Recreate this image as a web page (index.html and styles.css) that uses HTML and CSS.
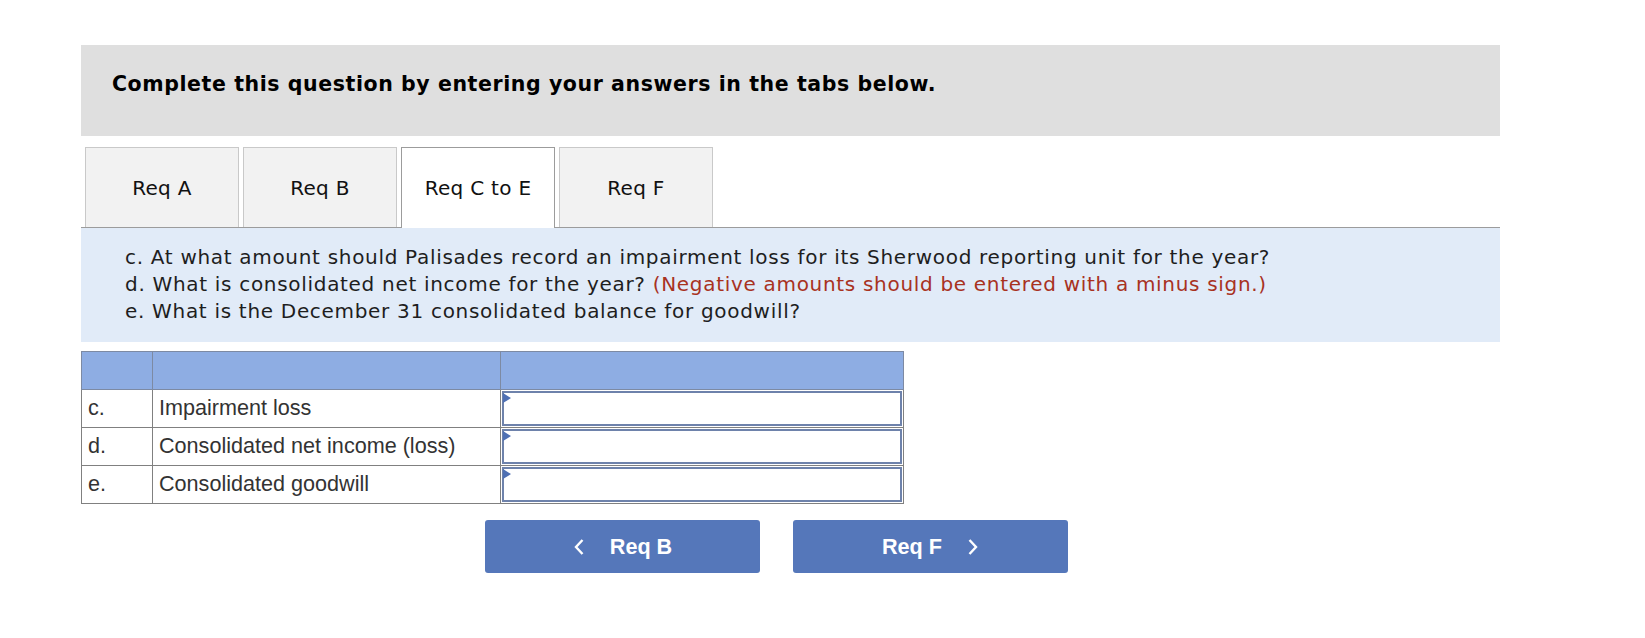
FILE: index.html
```html
<!DOCTYPE html>
<html>
<head>
<meta charset="utf-8">
<link rel="stylesheet" href="styles.css">
</head>
<body>
<div class="page">
  <div class="instructions">Complete this question by entering your answers in the tabs below.</div>
  <div class="tabs">
    <div class="tab">Req A</div>
    <div class="tab">Req B</div>
    <div class="tab active">Req C to E</div>
    <div class="tab">Req F</div>
  </div>
  <div class="panel">
    <p>c. At what amount should Palisades record an impairment loss for its Sherwood reporting unit for the year?</p>
    <p>d. What is consolidated net income for the year? <span class="note">(Negative amounts should be entered with a minus sign.)</span></p>
    <p>e. What is the December 31 consolidated balance for goodwill?</p>
  </div>
  <table class="answer">
    <colgroup><col class="c1"><col class="c2"><col class="c3"></colgroup>
    <thead><tr><th></th><th></th><th></th></tr></thead>
    <tbody>
      <tr><td>c.</td><td>Impairment loss</td><td class="inp"><div class="box"></div><span class="flag"></span></td></tr>
      <tr><td>d.</td><td>Consolidated net income (loss)</td><td class="inp"><div class="box"></div><span class="flag"></span></td></tr>
      <tr><td>e.</td><td>Consolidated goodwill</td><td class="inp"><div class="box"></div><span class="flag"></span></td></tr>
    </tbody>
  </table>
  <div class="nav">
    <div class="btn"><svg class="chev" width="12" height="18" viewBox="0 0 12 18"><path d="M9.5 2 L3 9 L9.5 16" fill="none" stroke="#fff" stroke-width="2.4"/></svg><span>Req B</span></div>
    <div class="btn"><span>Req F</span><svg class="chev" width="12" height="18" viewBox="0 0 12 18"><path d="M2.5 2 L9 9 L2.5 16" fill="none" stroke="#fff" stroke-width="2.4"/></svg></div>
  </div>
</div>
</body>
</html>
```
FILE: styles.css
```css
body {
  margin: 0;
  background: #fff;
  color: #000;
}
.page {
  margin: 45px 0 0 81px;
  width: 1419px;
}
.instructions {
  background: #dfdfdf;
  height: 91px;
  box-sizing: border-box;
  padding: 26px 0 0 31px;
  font-family: "DejaVu Sans", Verdana, sans-serif;
  font-weight: bold;
  font-size: 20.5px;
  letter-spacing: 0.58px;
  line-height: 27px;
}
.tabs {
  display: flex;
  align-items: flex-start;
  gap: 4px;
  padding-left: 4px;
  margin-top: 11px;
  border-bottom: 1px solid #9c9c9c;
}
.tab {
  width: 154px;
  height: 80px;
  box-sizing: border-box;
  border: 1px solid #c9c9c9;
  border-bottom: none;
  background: #f2f2f2;
  display: flex;
  align-items: center;
  justify-content: center;
  font-family: "DejaVu Sans", Verdana, sans-serif;
  font-size: 20px;
  letter-spacing: 0.3px;
  color: #111;
}
.tab.active {
  background: #fff;
  border-color: #9c9c9c;
  height: 81px;
  margin-bottom: -1px;
}
.panel {
  background: #e1ebf8;
  height: 114px;
  box-sizing: border-box;
  padding: 16px 0 0 44px;
  font-family: "DejaVu Sans", Verdana, sans-serif;
  font-size: 20px;
  letter-spacing: 0.69px;
  line-height: 27px;
  color: #1e1e1e;
}
.panel p {
  margin: 0;
  white-space: nowrap;
}
.note {
  color: #a8321f;
}
.answer {
  margin-top: 9px;
  border-collapse: collapse;
  width: 822px;
  table-layout: fixed;
  font-family: "Liberation Sans", Arial, sans-serif;
  font-size: 21.6px;
  color: #333;
}
.c1 { width: 71px; }
.c2 { width: 348px; }
.c3 { width: 403px; }
.answer th {
  background: #8eade3;
  height: 37px;
  border: 1px solid #7d8aa3;
  padding: 0;
}
.answer td {
  height: 37px;
  border: 1px solid #808080;
  padding: 0 0 2px 6px;
  box-sizing: border-box;
}
.answer td.inp {
  padding: 1px;
  position: relative;
  border-left-color: #6a7fab;
}
.box {
  height: 35px;
  box-sizing: border-box;
  border: 2px solid #6e82ab;
  background: #fff;
}
.flag {
  position: absolute;
  left: 2px;
  top: 3px;
  width: 0;
  height: 0;
  border-top: 5px solid transparent;
  border-bottom: 5px solid transparent;
  border-left: 8px solid #4f70b3;
}
.nav {
  display: flex;
  gap: 33px;
  margin-top: 16px;
  padding-left: 404px;
}
.btn {
  width: 275px;
  height: 53px;
  background: #5577ba;
  border-radius: 3px;
  display: flex;
  align-items: center;
  justify-content: center;
  gap: 25px;
  color: #fff;
  font-family: "Liberation Sans", Arial, sans-serif;
  font-weight: bold;
  font-size: 21.6px;
}
.chev {
  display: block;
}
```
